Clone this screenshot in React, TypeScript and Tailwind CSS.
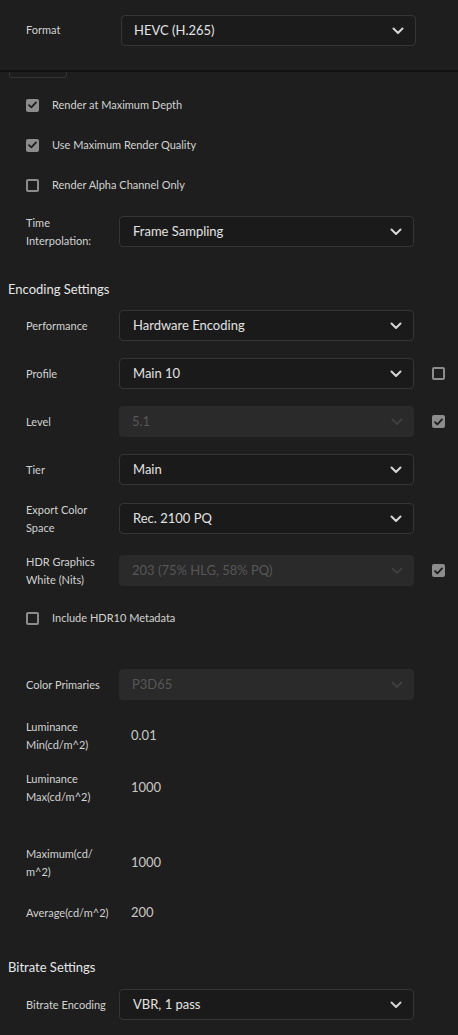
import React from "react";

const font = { fontFamily: "Lato, 'Open Sans', sans-serif" };

function Chevron({ dim }: { dim?: boolean }) {
  return (
    <svg width="12" height="8" viewBox="0 0 12 8" className="shrink-0">
      <path
        d="M1.5 1.5 L6 6 L10.5 1.5"
        fill="none"
        stroke={dim ? "#3e3e3e" : "#d6d6d6"}
        strokeWidth="2"
        strokeLinecap="round"
        strokeLinejoin="round"
      />
    </svg>
  );
}

function Check({ on }: { on: boolean }) {
  return on ? (
    <div className="w-[13px] h-[13px] rounded-[2px] bg-[#8c8c8c] flex items-center justify-center shrink-0">
      <svg width="9" height="8" viewBox="0 0 9 8">
        <path d="M1 4.2 L3.4 6.4 L8 1.4" fill="none" stroke="#1e1e1e" strokeWidth="1.8" strokeLinecap="round" strokeLinejoin="round" />
      </svg>
    </div>
  ) : (
    <div className="w-[13px] h-[13px] rounded-[2px] border-2 border-[#8c8c8c] shrink-0" />
  );
}

function Select({ value, disabled }: { value: string; disabled?: boolean }) {
  return (
    <div
      className={`w-[295px] h-[31px] rounded-[4px] flex items-center justify-between pl-[13px] pr-[11px] ${
        disabled ? "bg-[#2a2a2a] text-[#575757]" : "bg-[#1a1a1a] border border-[#353535] text-[#e2e2e2]"
      }`}
    >
      <span className="text-[13px]">{value}</span>
      <Chevron dim={disabled} />
    </div>
  );
}

function Label({ children }: { children: React.ReactNode }) {
  return <div className="w-[93px] shrink-0 text-[11px] leading-[18px] text-[#d2d2d2]">{children}</div>;
}

function SelectRow({
  label,
  value,
  disabled,
  check,
  mt,
}: {
  label: React.ReactNode;
  value: string;
  disabled?: boolean;
  check?: boolean;
  mt: string;
}) {
  return (
    <div className={`flex items-center pl-[26px] h-[31px] ${mt}`}>
      <Label>{label}</Label>
      <Select value={value} disabled={disabled} />
      {check !== undefined && (
        <div className="ml-[18px]">
          <Check on={check} />
        </div>
      )}
    </div>
  );
}

function CheckRow({ label, on, mt }: { label: string; on: boolean; mt?: string }) {
  return (
    <div className={`flex items-center pl-[26px] h-[40px] ${mt ?? ""}`}>
      <Check on={on} />
      <span className="ml-[13px] text-[11px] text-[#d2d2d2]">{label}</span>
    </div>
  );
}

function ValueRow({ label, value, h, mt }: { label: React.ReactNode; value: string; h: string; mt: string }) {
  return (
    <div className={`flex items-center pl-[26px] ${h} ${mt}`}>
      <Label>{label}</Label>
      <span className="ml-[12px] text-[13px] text-[#c8c8c8]">{value}</span>
    </div>
  );
}

export default function App() {
  return (
    <div className="w-[458px] h-[1035px] bg-[#1e1e1e] overflow-hidden select-none" style={font}>
      {/* format header */}
      <div className="h-[72px] pt-[15px] pl-[26px] flex border-b-2 border-[#121212]">
        <div className="flex items-center h-[31px]">
          <div className="w-[95px] text-[11px] text-[#d2d2d2]">Format</div>
          <div className="w-[295px] h-[31px] rounded-[4px] border border-[#353535] bg-[#1b1b1b] flex items-center justify-between pl-[12px] pr-[11px]">
            <span className="text-[13px] text-[#e2e2e2]">HEVC (H.265)</span>
            <Chevron />
          </div>
        </div>
      </div>
      <div className="ml-[9px] w-[58px] h-[6px] border border-t-0 border-[#333] rounded-b-[3px]" />

      <CheckRow label="Render at Maximum Depth" on mt="mt-[7px]" />
      <CheckRow label="Use Maximum Render Quality" on />
      <CheckRow label="Render Alpha Channel Only" on={false} />

      <SelectRow label={<>Time<br />Interpolation:</>} value="Frame Sampling" mt="mt-[11px]" />

      <div className="mt-[33px] pl-[8px] text-[13px] leading-[18px] text-[#e6e6e6]">Encoding Settings</div>

      <SelectRow label="Performance" value="Hardware Encoding" mt="mt-[12px]" />
      <SelectRow label="Profile" value="Main 10" check={false} mt="mt-[17px]" />
      <SelectRow label="Level" value="5.1" disabled check mt="mt-[17px]" />
      <SelectRow label="Tier" value="Main" mt="mt-[17px]" />
      <SelectRow label={<>Export Color<br />Space</>} value="Rec. 2100 PQ" mt="mt-[18px]" />
      <SelectRow label={<>HDR Graphics<br />White (Nits)</>} value="203 (75% HLG, 58% PQ)" disabled check mt="mt-[21px]" />

      <CheckRow label="Include HDR10 Metadata" on={false} mt="mt-[12px]" />

      <SelectRow label="Color Primaries" value="P3D65" disabled mt="mt-[31px]" />

      <ValueRow label={<>Luminance<br />Min(cd/m^2)</>} value="0.01" h="h-[36px]" mt="mt-[18px]" />
      <ValueRow label={<>Luminance<br />Max(cd/m^2)</>} value="1000" h="h-[36px]" mt="mt-[16px]" />
      <ValueRow label={<>Maximum(cd/<br />m^2)</>} value="1000" h="h-[36px]" mt="mt-[39px]" />
      <ValueRow label="Average(cd/m^2)" value="200" h="h-[18px]" mt="mt-[23px]" />

      <div className="mt-[36px] pl-[8px] text-[13px] leading-[18px] text-[#e6e6e6]">Bitrate Settings</div>

      <SelectRow label="Bitrate Encoding" value="VBR, 1 pass" mt="mt-[13px]" />
    </div>
  );
}
